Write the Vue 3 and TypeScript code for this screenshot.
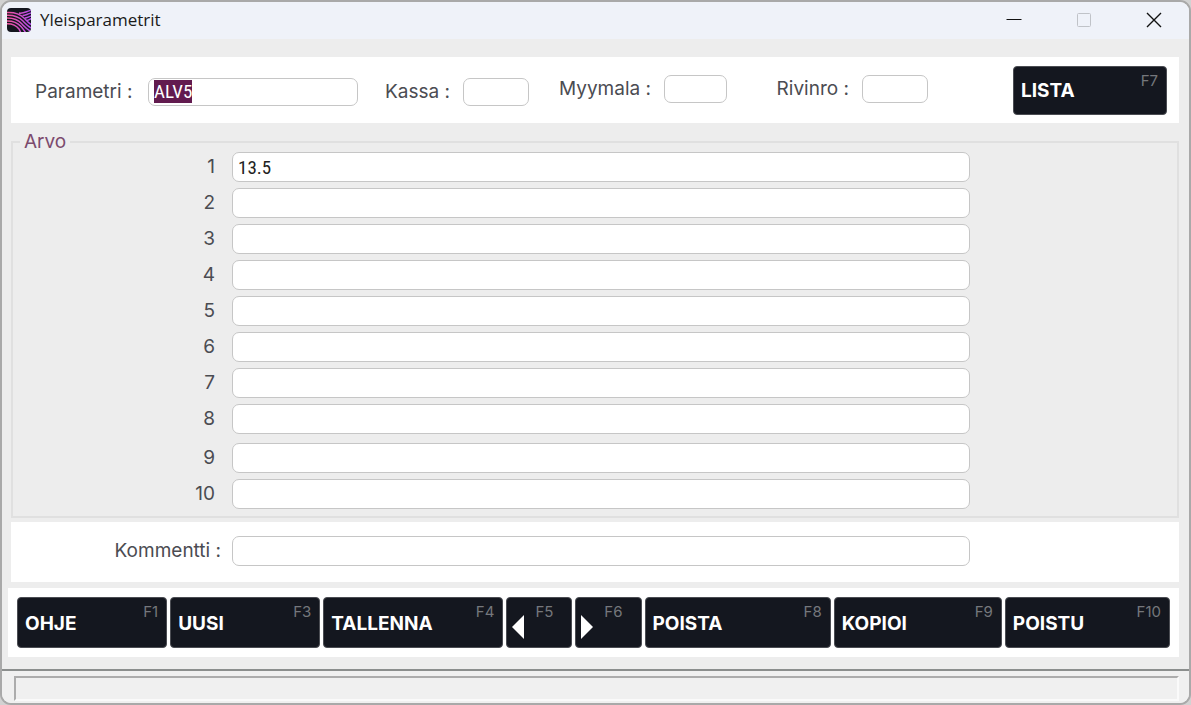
<script setup lang="ts">
import { onMounted, ref } from 'vue'

interface ActionKey {
  label: string
  hotkey: string
  size: number
  arrow?: 'left' | 'right'
}

const actions: ActionKey[] = [
  { label: 'OHJE', hotkey: 'F1', size: 150 },
  { label: 'UUSI', hotkey: 'F3', size: 150 },
  { label: 'TALLENNA', hotkey: 'F4', size: 180 },
  { label: 'Edellinen', hotkey: 'F5', size: 66, arrow: 'left' },
  { label: 'Seuraava', hotkey: 'F6', size: 66, arrow: 'right' },
  { label: 'POISTA', hotkey: 'F8', size: 186 },
  { label: 'KOPIOI', hotkey: 'F9', size: 168 },
  { label: 'POISTU', hotkey: 'F10', size: 165 },
]

const parametri = ref('ALV5')
const kassa = ref('')
const myymala = ref('')
const rivinro = ref('')
const kommentti = ref('')
const values = ref<string[]>(['13.5', '', '', '', '', '', '', '', '', ''])

const parametriInput = ref<HTMLInputElement | null>(null)

onMounted(() => {
  parametriInput.value?.focus()
  parametriInput.value?.select()
})
</script>

<template>
  <div class="window">
    <header class="titlebar">
      <svg class="app-icon" viewBox="0 0 24 24" aria-hidden="true">
        <defs>
          <linearGradient id="wave" x1="0" y1="0" x2="24" y2="0" gradientUnits="userSpaceOnUse">
            <stop offset="0" stop-color="#f0559a" />
            <stop offset="1" stop-color="#b44cf0" />
          </linearGradient>
          <clipPath id="tile"><rect width="24" height="24" rx="4" /></clipPath>
        </defs>
        <rect width="24" height="24" rx="4" fill="#14161f" />
        <g clip-path="url(#tile)" fill="none" stroke="url(#wave)" stroke-width="1.5">
          <path d="M0 4.500C9 4 13 6 17 10S21 15 25 17" />
          <path d="M0 7.300C8 7 12 9 16 13S20 18 25 20.500" />
          <path d="M0 10.100C7 10 11 11.500 15 16S19 21 24 23.500" />
          <path d="M0 12.900C6 12.800 10 14 14 18.500S17 23 19 25" />
          <path d="M0 15.700C5 15.600 9 17 12 21L14 25" />
          <path d="M12 5C16 6 19 3.500 25 2" />
          <path d="M15.500 7.500C18 7.800 20 6 25 4.800" />
          <path d="M18 10C20 10 22 8.500 25 7.600" />
          <path d="M20 12.500C22 12.200 23 11 25 10.400" />
        </g>
      </svg>
      <h1 class="title">Yleisparametrit</h1>
      <div class="window-buttons">
        <button type="button" aria-label="Pienennä">
          <svg viewBox="0 0 16 16"><path d="M0.500 7.500H15.500" stroke="#111" /></svg>
        </button>
        <button type="button" aria-label="Suurenna" disabled>
          <svg viewBox="0 0 16 16"><rect x="1.500" y="1.500" width="13" height="13" rx="1" stroke="#c0c3c8" /></svg>
        </button>
        <button type="button" aria-label="Sulje">
          <svg viewBox="0 0 16 16"><path d="M1 1L15 15M15 1L1 15" stroke="#111" stroke-width="1.400" /></svg>
        </button>
      </div>
    </header>

    <main class="content">
      <section class="panel search">
        <div class="pair pair-main">
          <label for="parametri">Parametri :</label>
          <input id="parametri" ref="parametriInput" v-model="parametri" type="text" />
          <label class="next" for="kassa">Kassa :</label>
          <input id="kassa" v-model="kassa" type="text" />
        </div>
        <div class="pair pair-extra">
          <label for="myymala">Myymala :</label>
          <input id="myymala" v-model="myymala" type="text" />
          <label class="next" for="rivinro">Rivinro :</label>
          <input id="rivinro" v-model="rivinro" type="text" />
        </div>
        <button class="key list-key" type="button">
          <span class="caption">LISTA</span>
          <span class="hotkey">F7</span>
        </button>
      </section>

      <fieldset class="group">
        <legend>Arvo</legend>
        <div v-for="(_, i) in values" :key="i" class="row" :class="{ 'row-break': i === 8 }">
          <label :for="`arvo-${i + 1}`">{{ i + 1 }}</label>
          <input :id="`arvo-${i + 1}`" v-model="values[i]" type="text" />
        </div>
      </fieldset>

      <section class="panel comment">
        <div class="row">
          <label for="kommentti">Kommentti :</label>
          <input id="kommentti" v-model="kommentti" type="text" />
        </div>
      </section>

      <nav class="actions">
        <button
          v-for="action in actions"
          :key="action.hotkey"
          type="button"
          class="key"
          :class="{ 'arrow-key': action.arrow }"
          :style="{ flex: `${action.size} 1 ${action.size}px` }"
          :aria-label="action.arrow ? action.label : undefined"
        >
          <svg v-if="action.arrow" class="arrow" viewBox="0 0 12 24" aria-hidden="true">
            <path :d="action.arrow === 'left' ? 'M12 0V24L0 12Z' : 'M0 0V24L12 12Z'" fill="#fff" />
          </svg>
          <span v-else class="caption">{{ action.label }}</span>
          <span class="hotkey">{{ action.hotkey }}</span>
        </button>
      </nav>
    </main>

    <footer class="status"><div class="status-field"></div></footer>
  </div>
</template>

<style>
body {
  background: #d2d2d2;
}
</style>

<style scoped>
* {
  box-sizing: border-box;
}

.window {
  display: flex;
  flex-direction: column;
  min-height: 100vh;
  overflow: hidden;
  border: 2px solid #a9a9a9;
  border-radius: 11px;
  background: #ededed;
  color: #4b4c52;
  font-family: Inter, "Liberation Sans", sans-serif;
  font-size: 19px;
  line-height: 20px;
}

.titlebar {
  display: flex;
  align-items: center;
  height: 37px;
  padding: 0 0 2px 5px;
  background: #eff2f9;
}

.app-icon {
  width: 24px;
  height: 24px;
}

.title {
  margin: 0 0 0 9px;
  color: #1a1a1a;
  font: 400 17px/24px "Open Sans", "Noto Sans", sans-serif;
}

.window-buttons {
  display: flex;
  margin-left: auto;
}

.window-buttons button {
  display: flex;
  align-items: center;
  justify-content: center;
  width: 70px;
  height: 34px;
  padding: 0;
  border: 0;
  background: none;
}

.window-buttons svg {
  width: 16px;
  height: 16px;
  fill: none;
}

.content {
  padding: 18px 10px 12px 9px;
}

.panel {
  background: #fff;
}

input {
  min-width: 0;
  height: 30px;
  padding: 0 5px;
  border: 1px solid #c6c6c6;
  border-radius: 7px;
  outline: none;
  background: #fff;
  color: #222;
  font: 400 19px/24px "Liberation Sans Narrow", "Roboto Condensed", Roboto, sans-serif;
}

input::selection {
  background: #621b4f;
  color: #fff;
}

.search {
  display: flex;
  align-items: center;
  height: 66px;
  padding: 0 12px 0 24px;
}

.pair {
  display: grid;
  align-items: center;
  white-space: nowrap;
}

.pair-main {
  grid-template-columns: 113px 210px 105px 66px;
  padding-top: 3px;
}

.pair-extra {
  grid-template-columns: 105px 63px 135px 66px;
  margin-left: 30px;
  padding-bottom: 3px;
}

.pair input {
  width: 100%;
  height: 28px;
}

.next {
  justify-self: end;
  padding-right: 13px;
}

.key {
  display: flex;
  align-items: center;
  justify-content: space-between;
  min-width: 0;
  height: 51px;
  padding: 6px 8px 4px 7px;
  border: 1px solid #4b4d53;
  border-radius: 4px;
  background: #14171f;
  color: #fff;
  font: 700 19px/20px Inter, "Liberation Sans", sans-serif;
}

.hotkey {
  align-self: flex-start;
  color: #75777c;
  font-size: 15px;
  font-weight: 400;
  line-height: 16px;
}

.list-key {
  flex: 0 0 154px;
  height: 49px;
  margin-left: auto;
}

.group {
  min-width: 0;
  margin: 9px 0 0;
  padding: 0 0 7px;
  border: 2px solid #e0e0e0;
}

.group legend {
  margin-left: 7px;
  padding: 0 4px;
  color: #7c4a6d;
}

.row {
  display: grid;
  grid-template-columns: 202px minmax(0, 1fr);
  column-gap: 17px;
  align-items: center;
  padding-right: 207px;
}

.row label {
  justify-self: end;
}

.row + .row {
  margin-top: 6px;
}

.row + .row-break {
  margin-top: 9px;
}

.comment {
  margin-top: 4px;
  padding: 14px 2px 16px;
}

.comment .row {
  grid-template-columns: 208px minmax(0, 1fr);
  column-gap: 11px;
}

.actions {
  display: flex;
  gap: 3px;
  margin: 6px 0 0 -3px;
  padding: 9px;
  background: #fff;
}

.arrow-key {
  padding: 6px 18px 4px 5px;
}

.arrow {
  align-self: flex-end;
  width: 12px;
  height: 24px;
  margin-bottom: 4px;
}

.status {
  flex: 1;
  display: flex;
  padding: 5px 10px 2px 12px;
  border-top: 2px solid #8b8e8d;
  background: #f0f0f0;
}

.status-field {
  flex: 1;
  min-height: 24px;
  border: 2px solid;
  border-color: #acacac #fafafa #fafafa #acacac;
}
</style>
